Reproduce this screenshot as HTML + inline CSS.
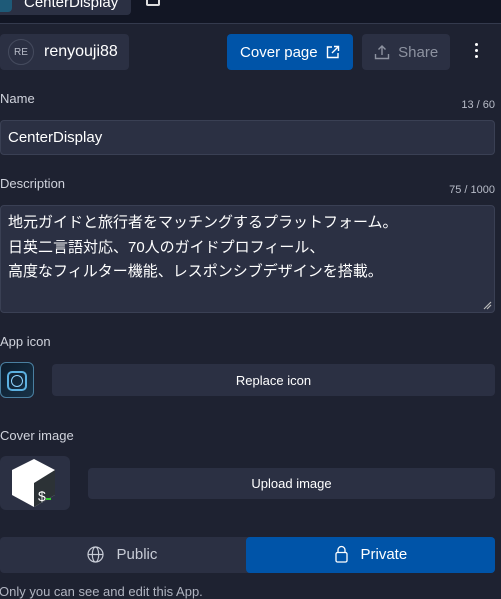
<!DOCTYPE html>
<html><head><meta charset="utf-8"><style>
*{box-sizing:border-box;margin:0;padding:0}
body{width:501px;height:599px;overflow:hidden;background:#1e2231;font-family:"Liberation Sans","Noto Sans CJK JP",sans-serif;color:#e6e8ee;position:relative}
.a{position:absolute}
.top{left:0;top:0;width:501px;height:24px;background:#121624;border-bottom:1px solid #343a4d}
.lbl{font-size:13px;color:#d0d3dc}
.cnt{font-size:11px;color:#b8bcc8;right:6px}
.inp{background:#2b3043;border:1px solid #3a4054;border-radius:4px}
.btn{background:#2b3043;border-radius:4px;font-size:13px;color:#fff;display:flex;align-items:center;justify-content:center}
</style></head><body>
<div class="a top"></div>
<div class="a" style="left:-4px;top:-10px;width:135px;height:25px;background:#2b3043;border-radius:4px"></div>
<div class="a" style="left:-4px;top:-8px;width:16px;height:20px;border-radius:4px;background:#1e5a78"></div>
<div class="a" style="left:24px;top:-6px;font-size:15px;color:#fff">CenterDisplay</div>
<div class="a" style="left:146px;top:-4px;width:14px;height:10px;border:2px solid #ddd;border-top:none;border-radius:2px"></div>

<div class="a" style="left:0;top:34px;width:129px;height:36px;background:#2b3043;border-radius:4px"></div>
<div class="a" style="left:8px;top:39px;width:26px;height:26px;border:1px solid #454b5e;border-radius:50%;font-size:10px;color:#b8bcc8;display:flex;align-items:center;justify-content:center">RE</div>
<div class="a" style="left:44px;top:43px;font-size:16px;color:#fff">renyouji88</div>

<div class="a btn" style="left:227px;top:34px;width:126px;height:36px;background:#0054a8;font-size:15px">Cover page&nbsp;&nbsp;<svg width="14" height="14" viewBox="0 0 14 14" fill="none" stroke="#fff" stroke-width="1.4"><path d="M6 2H1.5v10.5H12V8M8 1.5h4.5V6M12.5 1.5 6 8"/></svg></div>
<div class="a btn" style="left:362px;top:34px;width:88px;height:36px;font-size:15px;color:#8d92a0"><svg width="16" height="16" viewBox="0 0 16 16" fill="none" stroke="#8d92a0" stroke-width="1.4"><path d="M8 11V2M4.5 5.5 8 2l3.5 3.5M1.5 10v4.5h13V10"/></svg>&nbsp;&nbsp;Share</div>
<div class="a" style="left:475px;top:43px;width:3px;height:3px;background:#fff;border-radius:50%;box-shadow:0 6px 0 #fff,0 12px 0 #fff"></div>

<div class="a lbl" style="left:0;top:91px">Name</div>
<div class="a cnt" style="top:99px">13 / 60</div>
<div class="a inp" style="left:0;top:120px;width:495px;height:35px"></div>
<div class="a" style="left:8px;top:129px;font-size:15px;color:#fff">CenterDisplay</div>

<div class="a lbl" style="left:0;top:176px">Description</div>
<div class="a cnt" style="top:184px">75 / 1000</div>
<div class="a inp" style="left:0;top:205px;width:495px;height:108px"></div>
<div class="a" style="left:8px;top:211px;font-size:15px;line-height:24.5px;color:#fff">地元ガイドと旅行者をマッチングするプラットフォーム。<br>日英二言語対応、70人のガイドプロフィール、<br>高度なフィルター機能、レスポンシブデザインを搭載。</div>
<svg class="a" style="left:482px;top:300px" width="10" height="10"><path d="M2 9 9 2M5 9 9 5" stroke="#bbb" stroke-width="1.2"/></svg>

<div class="a lbl" style="left:0;top:334px">App icon</div>
<div class="a" style="left:0;top:362px;width:34px;height:36px;border-radius:6px;background:linear-gradient(135deg,#0d1c2c,#173247);border:1px solid #4a7fa0"></div>
<div class="a" style="left:7px;top:371px;width:20px;height:20px;border:2px solid #5bb0e0;border-radius:5px"></div>
<div class="a" style="left:11px;top:375px;width:12px;height:12px;border:1.5px solid #8fd4ff;border-radius:50%"></div>
<div class="a btn" style="left:52px;top:364px;width:443px;height:32px">Replace icon</div>

<div class="a lbl" style="left:0;top:428px">Cover image</div>
<div class="a" style="left:0;top:456px;width:70px;height:54px;background:#2b3043;border-radius:6px"></div>
<svg class="a" style="left:8px;top:457px" width="52" height="52" viewBox="0 0 52 52"><path d="M26 2 47 13v25L26 50 4 38V13z" fill="#fff"/><path d="M26 26 47 13v25L26 50z" fill="#2c3236"/><text x="30" y="44" font-size="14" fill="#fff" font-family="Liberation Sans">$</text><path d="M38 42h5" stroke="#3c3" stroke-width="2"/></svg>
<div class="a btn" style="left:88px;top:468px;width:407px;height:31px">Upload image</div>

<div class="a" style="left:0;top:537px;width:495px;height:36px;background:#2b3043;border-radius:4px"></div>
<div class="a" style="left:87px;top:546px;display:flex;align-items:center;font-size:15px;color:#c8ccd6"><svg width="17" height="17" viewBox="0 0 17 17" fill="none" stroke="#c8ccd6" stroke-width="1.2"><circle cx="8.5" cy="8.5" r="7.5"/><ellipse cx="8.5" cy="8.5" rx="3.2" ry="7.5"/><path d="M1 8.5h15"/></svg>&nbsp;&nbsp;&nbsp;Public</div>
<div class="a" style="left:246px;top:537px;width:249px;height:36px;background:#0054a8;border-radius:4px"></div>
<div class="a" style="left:335px;top:545px;display:flex;align-items:center;font-size:15px;color:#fff"><svg width="13" height="18" viewBox="0 0 13 18" fill="none" stroke="#fff" stroke-width="1.3"><rect x="1" y="7.5" width="11" height="9.5" rx="1.5"/><path d="M3 7.5V5a3.5 3.5 0 0 1 7 0v2.5"/></svg>&nbsp;&nbsp;&nbsp;Private</div>
<div class="a" style="left:-1px;top:584px;font-size:13px;color:#b0b4c0">Only you can see and edit this App.</div>
</body></html>
